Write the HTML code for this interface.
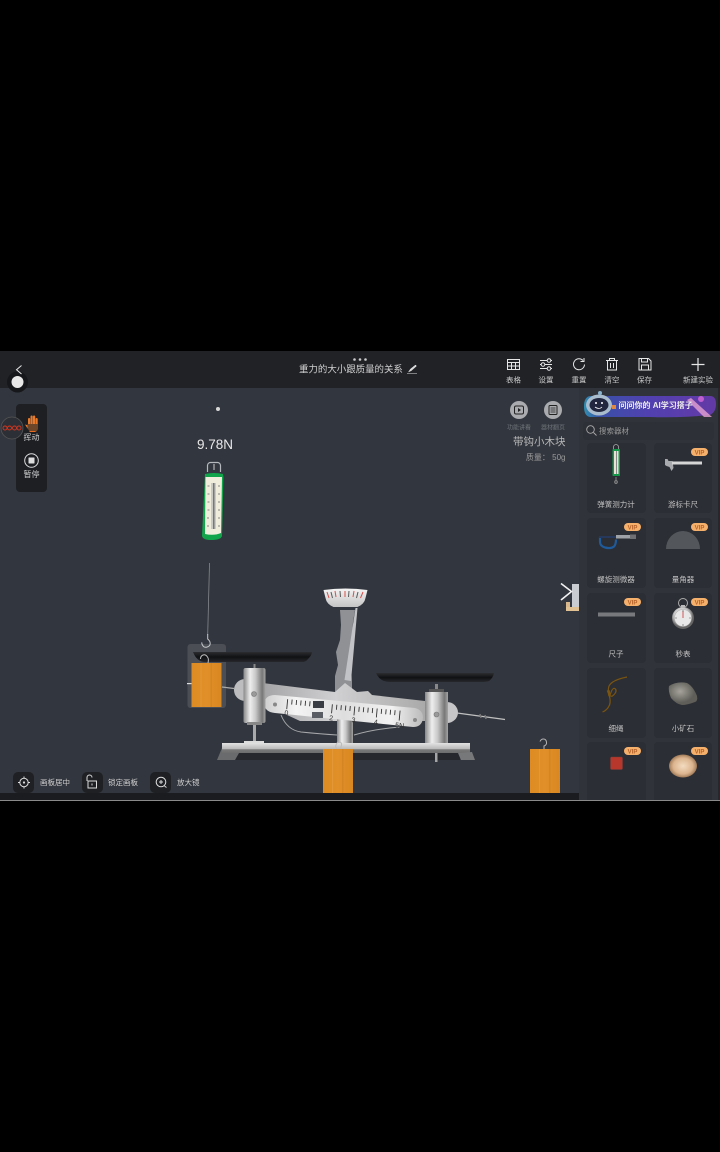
<!DOCTYPE html>
<html lang="zh">
<head>
<meta charset="utf-8">
<style>
html,body{margin:0;padding:0;background:#000;width:720px;height:1152px;overflow:hidden}
svg{display:block;position:absolute;left:0;top:0;filter:blur(.35px)}
text{font-family:"Liberation Sans","Noto Sans CJK SC",sans-serif}
</style>
</head>
<body>
<svg width="720" height="1152" viewBox="0 0 720 1152" xmlns="http://www.w3.org/2000/svg">
<defs>
<linearGradient id="cyl" x1="0" x2="1" y1="0" y2="0"><stop offset="0" stop-color="#888"/><stop offset=".3" stop-color="#eee"/><stop offset=".55" stop-color="#c8c8c8"/><stop offset=".85" stop-color="#777"/><stop offset="1" stop-color="#a5a5a5"/></linearGradient>
<linearGradient id="wood" x1="0" x2="1" y1="0" y2="0"><stop offset="0" stop-color="#dd8b22"/><stop offset=".5" stop-color="#e19029"/><stop offset="1" stop-color="#d98720"/></linearGradient>
<linearGradient id="pan" x1="0" x2="0" y1="0" y2="1"><stop offset="0" stop-color="#2c2d30"/><stop offset=".5" stop-color="#101113"/><stop offset="1" stop-color="#26272b"/></linearGradient>
<linearGradient id="beam" x1="0" x2="1" y1="0" y2="0"><stop offset="0" stop-color="#9a9a9c"/><stop offset=".5" stop-color="#d0d0d2"/><stop offset="1" stop-color="#aaa"/></linearGradient>
<linearGradient id="plate" x1="0" x2="1" y1="0" y2="0"><stop offset="0" stop-color="#cfcfcf"/><stop offset=".2" stop-color="#f4f4f4"/><stop offset=".5" stop-color="#dedede"/><stop offset=".8" stop-color="#f2f2f2"/><stop offset="1" stop-color="#bbb"/></linearGradient>
<linearGradient id="base" x1="0" x2="0" y1="0" y2="1"><stop offset="0" stop-color="#e2e2e2"/><stop offset=".6" stop-color="#b8b8b8"/><stop offset=".65" stop-color="#7a7a7a"/><stop offset="1" stop-color="#6d6d6d"/></linearGradient>
<linearGradient id="dial" x1="0" x2="0" y1="0" y2="1"><stop offset="0" stop-color="#f4f4f4"/><stop offset="1" stop-color="#c4c4c4"/></linearGradient>
<linearGradient id="ai" x1="0" x2="1" y1="0" y2="0"><stop offset="0" stop-color="#2f8fb0"/><stop offset=".12" stop-color="#3a50a8"/><stop offset=".5" stop-color="#5240b0"/><stop offset="1" stop-color="#633aa6"/></linearGradient>
<radialGradient id="egg"><stop offset="0" stop-color="#f3dcc0"/><stop offset=".7" stop-color="#dbb48e"/><stop offset="1" stop-color="#a07a58"/></radialGradient>
<radialGradient id="rock" cx=".4" cy=".4"><stop offset="0" stop-color="#a5a39b"/><stop offset="1" stop-color="#5f5e58"/></radialGradient>
<radialGradient id="watch" cx=".45" cy=".4"><stop offset="0" stop-color="#eee"/><stop offset=".7" stop-color="#ccc"/><stop offset="1" stop-color="#666"/></radialGradient>
<g id="vip"><rect x="0" y="0" width="17" height="8" rx="4" fill="#f5b06c"/><text x="8.5" y="6.4" font-size="6" font-weight="bold" fill="#b5622a" text-anchor="middle">VIP</text></g>
<g id="wblock"><rect width="30" height="44" fill="url(#wood)"/><rect x="9" width="1" height="44" fill="#e8a045" opacity=".5"/><rect x="19" width="1.5" height="44" fill="#c97f1e" opacity=".5"/></g>
</defs>

<!-- app background -->
<rect x="0" y="351" width="720" height="449" fill="#32363e"/>
<rect x="0" y="351" width="720" height="37" fill="#202226"/>
<rect x="0" y="793" width="579" height="7" fill="#1b1c20"/>
<rect x="579" y="388" width="141" height="412" fill="#30333a"/>
<rect x="718" y="388" width="2" height="412" fill="#25272c"/>

<!-- top bar left -->
<circle cx="17.500" cy="382" r="10.500" fill="#16171a"/>
<circle cx="17.500" cy="382" r="6" fill="#e8e8e8"/>
<path d="M21.500 365.500l-5 4.200 5 4.300" fill="none" stroke="#e8e8e8" stroke-width="1"/>
<!-- title -->
<circle cx="354.500" cy="359.500" r="1.300" fill="#ccc"/><circle cx="360" cy="359.500" r="1.300" fill="#ccc"/><circle cx="365.500" cy="359.500" r="1.300" fill="#ccc"/>
<text x="299" y="372.500" font-size="9.450" fill="#cfcfcf">重力的大小跟质量的关系</text>
<path d="M408.500 372l2-3 5-4 1 1-5 4.500z M407 373.500h10" fill="#ddd" stroke="#ddd" stroke-width=".5"/>

<!-- toolbar icons -->
<g fill="none" stroke="#e6e6e6" stroke-width="1">
<rect x="507.500" y="359.500" width="12" height="10"/><path d="M507.500 362.500h12M507.500 366h12M511.500 362.500v7M515.500 362.500v7"/>
<path d="M540 360.500h12M540 364.500h12M540 368.500h12"/><circle cx="549" cy="360.500" r="1.800" fill="#202226"/><circle cx="543" cy="364.500" r="1.800" fill="#202226"/><circle cx="549" cy="368.500" r="1.800" fill="#202226"/>
<path d="M583 360.500a5.500 5.500 0 1 0 1.500 4M584 358v3.500h-3.500"/>
<path d="M606 360.500h12M609.500 360.500v-2h5v2M607.500 360.500v9.500h9v-9.500M610.500 363v5M613.500 363v5"/>
<path d="M639 358.500h9.500l2.500 2.500v9h-12zM641.500 358.500v3.500h6v-3.500M641.500 370v-5h7v5"/>
<path d="M698 358v13M691.500 364.500h13" stroke-width="1.200"/>
</g>
<g font-size="7.500" fill="#c8c8c8" text-anchor="middle">
<text x="513.500" y="382.500">表格</text>
<text x="546" y="382.500">设置</text>
<text x="579" y="382.500">重置</text>
<text x="612" y="382.500">清空</text>
<text x="644.500" y="382.500">保存</text>
<text x="698" y="382.500">新建实验</text>
</g>

<!-- left floating panel -->
<rect x="16" y="404" width="31" height="88" rx="4" fill="#1d1f23"/>
<circle cx="12" cy="428" r="11" fill="#2c2f35" stroke="#555" stroke-width=".8"/>
<g fill="none" stroke="#d8351f" stroke-width=".9"><circle cx="5" cy="428" r="2"/><circle cx="9.500" cy="428" r="2"/><circle cx="14.500" cy="428" r="2"/><circle cx="19" cy="428" r="2"/></g>
<g fill="#e87a2c">
<rect x="28" y="418" width="2.200" height="9" rx="1"/><rect x="30.500" y="415.500" width="2.200" height="10" rx="1"/><rect x="33" y="415.500" width="2.200" height="10" rx="1"/><rect x="35.500" y="418" width="2.200" height="9" rx="1"/>
<path d="M25 424.500l3.500 1 1 3h-2z"/>
</g>
<path d="M27.500 424h10.500v5q-1 3-3 3h-4q-2-1-3.500-3.500z" fill="#6d4528"/>
<path d="M29.500 431.500h6" stroke="#ea6a1f" stroke-width="1"/>
<text x="31.500" y="440" font-size="8" fill="#cfcfcf" text-anchor="middle">挥动</text>
<circle cx="31.500" cy="460.500" r="6.800" fill="none" stroke="#ddd" stroke-width="1"/>
<rect x="28.500" y="457.500" width="6" height="6" rx=".5" fill="#ddd"/>
<text x="31.500" y="477" font-size="8" fill="#cfcfcf" text-anchor="middle">暂停</text>

<!-- top small dot -->
<circle cx="218" cy="409" r="2" fill="#d8d8d8"/>

<!-- reading -->
<text x="215" y="449" font-size="13.500" fill="#e8e8e8" text-anchor="middle">9.78N</text>

<!-- spring balance -->
<path d="M207.500 472v-6.500a3 3 0 0 1 3-3h7a3 3 0 0 1 3 3v6.500" fill="none" stroke="#b5b8bc" stroke-width="1.200"/>
<path d="M214 464v6" stroke="#ccc" stroke-width="1"/>
<path d="M205 474q9-2 18 0l.5 3-1.500 59q-1 4-11 4-8 0-9-4z" fill="#12a44a"/>
<path d="M205.500 477h16.500l-1 56q-7 3-16 1z" fill="#f1eddc"/>
<rect x="211" y="483" width="5" height="46" fill="#c9c9c5"/><rect x="213" y="483" width="1.500" height="46" fill="#777"/>
<path d="M207.500 486h2M207.500 494h2M207.500 502h2M207.500 510h2M207 518h2M207 526h2M218 486h2M218 494h2M218 502h2M218 510h2M218 518h2M218 526h2" stroke="#666" stroke-width=".8"/>

<!-- selection box -->
<rect x="187.500" y="644" width="38.500" height="64" rx="3" fill="#4b4e55"/>
<rect x="187" y="683" width="6" height="1.200" fill="#ddd"/>
<path d="M222 687l12 1.500" stroke="#aaa" stroke-width="1.200"/>

<!-- string and hook to hanging block -->
<path d="M209.500 563l-1.800 72" stroke="#85888c" stroke-width=".8" fill="none"/>
<path d="M207.700 634v5q2.500 2 2.500 4.500t-3 3.500-4.500-1.500-.5-3" fill="none" stroke="#c6c8ca" stroke-width="1"/>

<!-- left pan -->
<path d="M193 652h119q0 3-4 7-2 3-6 3H205q-8 0-12-10z" fill="url(#pan)"/>
<!-- hanging block -->
<path d="M208 663q1-4-.5-6-2-3-4.500-2t-2.500 4" fill="none" stroke="#c0c0c0" stroke-width="1"/>
<use href="#wblock" transform="translate(191.500 663)"/>

<!-- right pan -->
<path d="M376 673h118q-1 5-5 8-3 1-8 1H390q-10 0-14-9z" fill="url(#pan)"/>

<!-- dial and pillar -->
<path d="M340 610L355 610 353 622 352 640 353 648 350 658 352 680 352 692 335 692 335 676 338 665 336 652 340 640 341 625Z" fill="#8f9195"/>
<path d="M355.500 608h2l-6.500 73-6.500-1z" fill="#c2c3c6"/>
<path d="M323.500 590q22-3 44 0l-2 8q-1 6-8 9h-24q-7-3-8-9z" fill="url(#dial)"/>
<g stroke-width="1" stroke="#5a5a5a"><path d="M331 592l1.500 6M340 591l.5 6M349 591l-.5 6M358 592l-1.500 6"/></g>
<g stroke-width="1" stroke="#d8504a"><path d="M327 592l2 6M335 591l1 6M345 591v6M354 591l-1 6M363 592l-2.500 6"/></g>

<!-- main beam -->
<circle cx="245" cy="690" r="11" fill="#bdbdbf"/>
<path d="M246 681l89 11 10-9 12 9 11-1 4 4 53 6v20H300l-54-25z" fill="url(#beam)"/>
<path d="M446 702a12 11 0 0 1 0 21z" fill="#c6c6c8"/>
<path d="M447 702a11 10.500 0 0 1 0 21z" fill="#c6c6c8"/>

<!-- center column -->
<rect x="337" y="716" width="16" height="28" fill="url(#cyl)"/>
<!-- wires -->
<path d="M281 715q6 15 20 17 20 2 36 3M354 735q20-6 46-8" fill="none" stroke="#a6a8aa" stroke-width="1"/>

<!-- scale plate -->
<path d="M275 695L415 708Q423 710 423 718 422 727 413 727L275 713Q265 712 264 704 265 695 275 695Z" fill="url(#plate)"/>
<circle cx="275" cy="704.500" r="2" fill="#888"/>
<circle cx="415" cy="720" r="2" fill="#888"/>
<g transform="translate(275 695) rotate(5.3)">
<path d="M13 3v10M17.500 3v5M22 3v5M26.500 3v5M31 3v5M35.500 3v5M58 4v9M62.500 4v5M67 4v5M71.500 4v5M76 4v5M80.500 4v9M85 4v5M89.500 4v5M94 4v5M98.500 4v5M103 4v9M107.500 4v5M112 4v5M116.500 4v5M121 4v5M126 4v10" stroke="#333" stroke-width=".9" fill="none"/>
<g font-size="7" fill="#333" text-anchor="middle">
<text x="13" y="19">0</text><text x="58" y="20">2</text><text x="80.500" y="20">3</text><text x="103" y="20">4</text><text x="127" y="21">5N</text>
</g>
</g>
<rect x="313" y="701" width="11" height="7" fill="#3a3d44"/>
<rect x="312" y="712" width="11" height="6" fill="#5a5d64"/>

<!-- left cylinder -->
<rect x="253.500" y="664" width="2" height="6" fill="#888"/>
<rect x="243.500" y="668" width="22" height="55" rx="2" fill="url(#cyl)"/>
<circle cx="254" cy="694" r="2.500" fill="#999" stroke="#777" stroke-width=".6"/>
<rect x="247" y="722" width="15" height="3" fill="#888"/>
<rect x="253" y="725" width="3" height="16" fill="#aaa"/>
<rect x="244" y="741" width="20" height="2" fill="#ddd"/>

<!-- right cylinder -->
<rect x="435" y="684" width="3" height="6" fill="#888"/>
<rect x="429" y="689" width="15" height="3" fill="#555"/>
<rect x="425" y="692" width="23" height="51" fill="url(#cyl)"/>
<circle cx="436.500" cy="714.500" r="2.500" fill="#999" stroke="#777" stroke-width=".6"/>

<!-- right needle -->
<path d="M457 713l48 6.500" stroke="#c0c0c0" stroke-width="1.200"/>
<path d="M480 714l1 4M485 715l1 4" stroke="#777" stroke-width="1.500"/>

<!-- base -->
<rect x="235" y="753" width="225" height="7" fill="#26282d"/>
<rect x="222" y="743" width="248" height="10" fill="url(#base)"/>
<path d="M222 748l-5 12h18l4-7h-17z" fill="#6a6b6d"/>
<path d="M458 753l3 7h14l-3-8z" fill="#77787a"/>
<rect x="435" y="753" width="2.500" height="9" fill="#a5a5a5"/>

<!-- center block -->
<path d="M338 749q-3-1-2-4 1-3 3-3 3 0 2.500 3-.5 2-1 4" fill="none" stroke="#bbb" stroke-width="1"/>
<use href="#wblock" transform="translate(323 749)"/>
<!-- right block -->
<path d="M544 749v-3q3-1 2.500-4t-3-3-3.500 2.500" fill="none" stroke="#b4b4b4" stroke-width="1"/>
<use href="#wblock" transform="translate(530 749)"/>

<!-- chevron and off-screen item -->
<rect x="572" y="584" width="7" height="23" fill="#c9cdd2"/>
<rect x="566" y="602" width="4" height="9" fill="#d8b78c"/>
<rect x="566" y="607" width="13" height="4" fill="#e0c194"/>
<path d="M561 583.500l10.500 8-10.500 8.500" fill="none" stroke="#f2f2f2" stroke-width="1.600"/>

<!-- bottom tools -->
<g>
<rect x="13" y="772" width="21" height="21" rx="5" fill="#1e2024"/>
<rect x="82" y="772" width="21" height="21" rx="5" fill="#1e2024"/>
<rect x="150" y="772" width="21" height="21" rx="5" fill="#1e2024"/>
<g fill="none" stroke="#dcdcdc" stroke-width="1">
<circle cx="24" cy="782.500" r="4.200"/><path d="M24 776.500v2M24 786.500v2M18 782.500h2M28 782.500h2"/><circle cx="24" cy="782.500" r=".6" fill="#ddd"/>
<path d="M87 781v-3.500a2.500 2.500 0 0 1 5 0"/><rect x="88" y="781" width="8.500" height="7"/><path d="M92 783.500v2"/>
<circle cx="161" cy="782" r="4.800"/><path d="M159 782h4M161 780v4M164.500 786l2 1.500"/>
</g>
<g font-size="7.500" fill="#cfcfcf">
<text x="40" y="785">画板居中</text>
<text x="108" y="785">锁定画板</text>
<text x="177" y="785">放大镜</text>
</g>
</g>

<!-- video/manual -->
<circle cx="519" cy="410" r="9" fill="#a9abae"/>
<rect x="514.500" y="406" width="9" height="8" rx="1.500" fill="none" stroke="#222" stroke-width="1"/><path d="M518 408v4l3-2z" fill="#222"/>
<circle cx="553" cy="410" r="9" fill="#a9abae"/>
<rect x="549" y="405.500" width="8" height="9" rx="1" fill="none" stroke="#222" stroke-width="1"/><path d="M550.500 408h5M550.500 410h5M550.500 412h5" stroke="#222" stroke-width=".7"/>
<text x="519" y="429.500" font-size="6" fill="#6f737a" text-anchor="middle">功能讲看</text>
<text x="553" y="429.500" font-size="6" fill="#6f737a" text-anchor="middle">器材翻页</text>
<text x="565.500" y="445" font-size="10.500" fill="#b8b8b8" text-anchor="end">带钩小木块</text>
<text x="565.500" y="460" font-size="8" fill="#9a9a9a" text-anchor="end">质量： 50g</text>

<!-- AI banner -->
<path d="M590 396h120q6 0 6 8t-6 11q-30 3-60 2h-60q-6-1-6-10.500t6-10.500z" fill="url(#ai)"/>
<path d="M691 398l21 19h-8l-17-17z" fill="#e5a3d2" opacity=".8"/>
<circle cx="701" cy="399" r="3" fill="#c05fd0"/>
<ellipse cx="599" cy="405" rx="13" ry="10.500" fill="#a9bccd"/>
<ellipse cx="599" cy="405" rx="9.500" ry="7" fill="#23263f"/>
<path d="M595 407q4 3 7 0" stroke="#fff" fill="none" stroke-width=".8"/><circle cx="596" cy="403" r="1" fill="#fff"/><circle cx="602" cy="403" r="1" fill="#fff"/>
<circle cx="600" cy="393" r="2" fill="#8ab3cc"/>
<rect x="612" y="405" width="4" height="4" fill="#e0883f"/>
<text x="618.500" y="408" font-size="8" font-weight="bold" fill="#eeeeee">问问你的 AI学习搭子</text>

<!-- search -->
<rect x="583" y="422" width="131" height="18" rx="3" fill="#2d3036"/>
<circle cx="590.500" cy="429.500" r="3.800" fill="none" stroke="#aaa" stroke-width=".9"/><path d="M593.500 432.500l3 3" stroke="#aaa" stroke-width=".9"/>
<text x="599" y="433.500" font-size="7.500" fill="#999">搜索器材</text>

<!-- cards -->
<g fill="#2b2e34">
<rect x="587" y="443" width="59" height="70" rx="4"/><rect x="654" y="443" width="58" height="70" rx="4"/>
<rect x="587" y="518" width="59" height="70" rx="4"/><rect x="654" y="518" width="58" height="70" rx="4"/>
<rect x="587" y="593" width="59" height="70" rx="4"/><rect x="654" y="593" width="58" height="70" rx="4"/>
<rect x="587" y="668" width="59" height="70" rx="4"/><rect x="654" y="668" width="58" height="70" rx="4"/>
<rect x="587" y="742" width="59" height="60" rx="4"/><rect x="654" y="742" width="58" height="60" rx="4"/>
</g>
<use href="#vip" x="691" y="448"/>
<use href="#vip" x="624" y="523"/><use href="#vip" x="691" y="523"/>
<use href="#vip" x="624" y="598"/><use href="#vip" x="691" y="598"/>
<use href="#vip" x="624" y="747"/><use href="#vip" x="691" y="747"/>

<g font-size="7.500" fill="#c0c0c0" text-anchor="middle">
<text x="616" y="507">弹簧测力计</text><text x="683" y="507">游标卡尺</text>
<text x="616" y="582">螺旋测微器</text><text x="683" y="582">量角器</text>
<text x="616" y="656.500">尺子</text><text x="683" y="656.500">秒表</text>
<text x="616" y="731">细绳</text><text x="683" y="731">小矿石</text>
</g>

<!-- item: spring scale -->
<path d="M613.500 449v-2a2.500 2.500 0 0 1 5 0v2" fill="none" stroke="#aaa" stroke-width=".8"/>
<rect x="612.500" y="449" width="7.500" height="27" rx=".8" fill="#139a48"/>
<rect x="614" y="451" width="4.500" height="23" fill="#e8e4d4"/><rect x="616" y="451" width="1" height="23" fill="#888"/>
<path d="M616 477v7" stroke="#999" stroke-width=".8"/><circle cx="616" cy="482" r="1.500" fill="none" stroke="#888" stroke-width=".7"/>

<!-- caliper -->
<path d="M665 459h2.500l1 2h4l1 7-2 3-2-4-3-1-1.500-1z" fill="#a9aaad"/>
<rect x="672" y="461.500" width="30" height="3" fill="#d6d6d6"/>

<!-- micrometer -->
<path d="M600 537v5q0 4 5 5.500 6 1.500 9-1 2-2 2-7" fill="none" stroke="#1f5a9a" stroke-width="2.200"/>
<path d="M599 537h17" stroke="#26385c" stroke-width="2"/>
<rect x="616" y="535" width="20" height="3.500" fill="#9fa2a6"/><rect x="630" y="534.500" width="6" height="4.500" fill="#6e7074"/>

<!-- protractor -->
<path d="M666 549a17 18 0 0 1 34 0z" fill="#53565b"/>

<!-- ruler -->
<rect x="598" y="612.500" width="37" height="4" fill="#77797c"/>

<!-- stopwatch -->
<circle cx="683" cy="603" r="4.500" fill="none" stroke="#aaa" stroke-width="1"/>
<rect x="681" y="605" width="4" height="3" fill="#bbb"/>
<circle cx="683" cy="618" r="11" fill="url(#watch)"/>
<circle cx="683" cy="618" r="8.500" fill="#e8e8e8" stroke="#aaa" stroke-width=".5"/>
<path d="M683 618v-7" stroke="#c33" stroke-width=".8"/><path d="M683 610v2M683 624v2M675 618h2M689 618h2" stroke="#555" stroke-width=".6"/>

<!-- string item -->
<path d="M627 677q-15 3-18 9-1 3-.5 8t3-3q2-4 4-2 2 3-3 7-3 1-3-3 0-4-2-2 4 9 2 14-2 5-7 7" fill="none" stroke="#7a5410" stroke-width="1.200"/>

<!-- rock -->
<path d="M669 686q8-5 18-3 6 3 10 13 1 5-2 6-8 3-13 3-6-1-11-7-3-7-2-12z" fill="url(#rock)"/>

<!-- red block -->
<rect x="610.500" y="757" width="12" height="12.500" rx="1" fill="#b8372c" stroke="#7a3a36" stroke-width=".5"/>

<!-- egg -->
<ellipse cx="683" cy="766" rx="14" ry="11.500" fill="url(#egg)"/>

<!-- clipped tail -->
<rect x="580" y="800" width="140" height="352" fill="#000"/>
<rect x="0" y="800" width="720" height="1" fill="#8a8a8a"/>
</svg>
</body>
</html>
